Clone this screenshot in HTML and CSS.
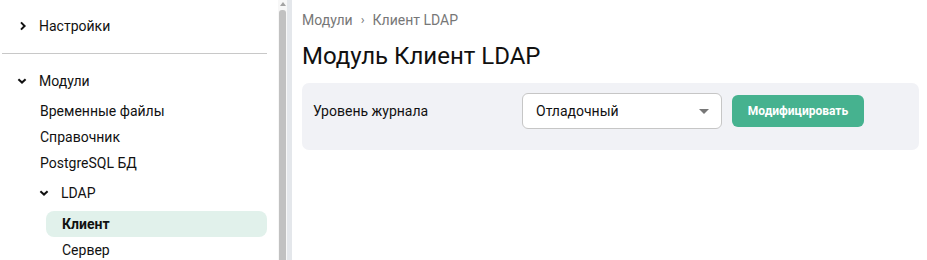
FILE: index.html
```html
<!DOCTYPE html>
<html lang="ru">
<head>
<meta charset="utf-8">
<link rel="stylesheet" href="styles.css">
</head>
<body>
<div class="app">
  <aside class="sidebar">
    <nav class="nav">
      <div class="row top">
        <svg class="chev" width="10" height="10" viewBox="0 0 10 10"><path d="M4 1.4 L7.6 5 L4 8.6" fill="none" stroke="#111" stroke-width="2"/></svg>
        <span>Настройки</span>
      </div>
      <div class="divider"></div>
      <div class="row top">
        <svg class="chev" width="10" height="10" viewBox="0 0 10 10"><path d="M1.4 3.2 L5 6.6 L8.6 3.2" fill="none" stroke="#111" stroke-width="2"/></svg>
        <span>Модули</span>
      </div>
      <div class="sub">
        <div class="row item">Временные файлы</div>
        <div class="row item">Справочник</div>
        <div class="row item">PostgreSQL БД</div>
        <div class="row group">
          <svg class="chev" width="10" height="10" viewBox="0 0 10 10"><path d="M1.4 3.2 L5 6.6 L8.6 3.2" fill="none" stroke="#111" stroke-width="2"/></svg>
          <span>LDAP</span>
        </div>
        <div class="leafs">
          <div class="row leaf active">Клиент</div>
          <div class="row leaf">Сервер</div>
        </div>
      </div>
    </nav>
    <div class="scrollbar">
      <div class="arrow"></div>
      <div class="thumb"></div>
    </div>
  </aside>
  <div class="strip"></div>
  <main class="main">
    <div class="crumbs"><span>Модули</span><span class="sep">›</span><span>Клиент LDAP</span></div>
    <h1 class="title">Модуль Клиент LDAP</h1>
    <div class="panel">
      <div class="label">Уровень журнала</div>
      <div class="select"><span>Отладочный</span><span class="caret"></span></div>
      <button class="btn">Модифицировать</button>
    </div>
  </main>
</div>
</body>
</html>
```
FILE: styles.css
```css
* { box-sizing: border-box; }
html, body { margin: 0; padding: 0; background: #fff; }
body { font-family: Roboto, "Noto Sans", sans-serif; color: #111; font-size: 14px; }
.app { display: flex; height: 260px; overflow: hidden; }
.sidebar { width: 287px; display: flex; flex: none; }
.nav { width: 278px; padding-top: 13px; }
.row { height: 26px; display: flex; align-items: center; white-space: nowrap; }
.top { padding-left: 17px; }
.chev { margin-right: 12px; flex: none; }
.divider { height: 1px; background: #c8c8c8; margin: 14px 11px 14px 2px; }
.sub { margin-top: 4px; }
.item { padding-left: 40px; }
.group { padding-left: 39px; margin-top: 4px; }
.group .chev { margin-right: 12px; }
.leafs { margin-top: 5px; }
.leaf { margin-left: 46px; margin-right: 11px; padding-left: 16px; border-radius: 8px; }
.leaf.active { background: #e1f1eb; font-weight: 700; }
.scrollbar { width: 9px; background: #f7f7f7; position: relative; padding-top: 10px; }
.arrow { position: absolute; top: 2px; left: 2px; width: 0; height: 0; border-left: 3px solid transparent; border-right: 3px solid transparent; border-bottom: 4px solid #a3a3a3; }
.thumb { margin-left: 1px; width: 7px; height: 260px; background: #c1c1c1; border-radius: 3px 3px 0 0; }
.strip { width: 5px; flex: none; background: #e4e7eb; }
.main { flex: 1; padding: 10px 8px 0 10px; }
.crumbs { color: #777; font-size: 14px; height: 19px; display: flex; align-items: center; gap: 8px; }
.crumbs .sep { font-size: 13px; }
.title { margin: 12px 0 0 0; font-size: 24px; font-weight: 400; line-height: 30px; height: 30px; }
.panel { margin-top: 12px; background: #f1f2f6; border-radius: 7px; height: 67px; display: flex; align-items: flex-start; padding: 10px 11px 0 11px; }
.label { width: 209px; height: 36px; display: flex; align-items: center; }
.select { width: 200px; height: 36px; background: #fff; border: 1px solid #c6c6c6; border-radius: 6px; display: flex; align-items: center; justify-content: space-between; padding: 0 12px 0 13px; font-size: 14px; }
.caret { width: 0; height: 0; border-left: 5px solid transparent; border-right: 5px solid transparent; border-top: 5px solid #777; }
.btn { margin-left: 10px; margin-top: 2px; height: 32px; width: 132px; background: #46b28f; color: #fff; border: none; border-radius: 6px; font-family: Roboto, "Noto Sans", sans-serif; font-weight: 700; font-size: 12px; padding: 0; }
```
